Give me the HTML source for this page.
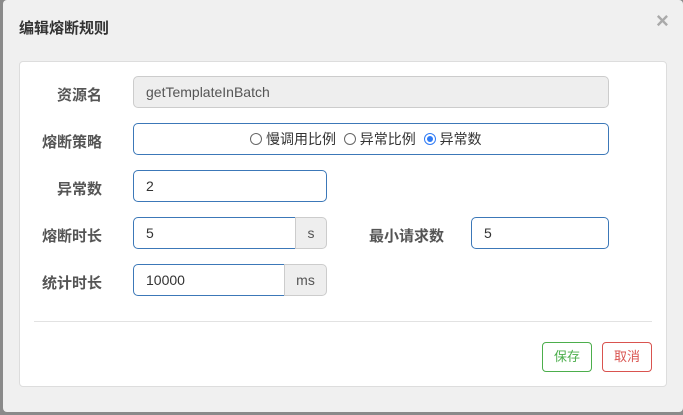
<!DOCTYPE html>
<html><head><meta charset="utf-8"><style>
*{box-sizing:border-box;margin:0;padding:0}
body{width:683px;height:415px;background:#8a8a8a;font-family:"Liberation Sans","Noto Sans CJK SC",sans-serif;position:relative;overflow:hidden}
.dlg{position:absolute;left:3px;top:0;width:680px;height:412px;background:#f0f0f0;border-radius:4px}
.title{position:absolute;left:19px;top:17px;font-size:15px;font-weight:bold;color:#333}
.x{position:absolute;left:656px;top:8px;font-size:22px;color:#aaa;font-weight:bold}
.panel{position:absolute;left:19px;top:61px;width:648px;height:326px;background:#fff;border:1px solid #ddd;border-radius:4px}
.lbl{position:absolute;font-size:15px;font-weight:bold;color:#555;text-align:right}
.in{position:absolute;height:32px;border:1px solid #3c78b8;border-radius:5px;font-size:14px;color:#333;padding-left:12px;line-height:30px;background:#fff}
.ad{position:absolute;height:32px;border:1px solid #ccc;background:#eee;border-radius:0 5px 5px 0;font-size:14px;color:#555;text-align:center;line-height:30px}
.r{display:inline-block;width:12px;height:12px;border:1px solid #666;border-radius:50%;vertical-align:-1px;margin-right:4px;position:relative}
.r.on{border-color:#2f7bf5;background:#fff}
.r.on:after{content:"";position:absolute;left:2px;top:2px;width:6px;height:6px;border-radius:50%;background:#2f7bf5}
.btn{position:absolute;top:342px;width:50px;height:30px;border:1px solid;border-radius:4px;font-size:13px;text-align:center;line-height:28px;background:#fff}
</style></head><body>
<div class="dlg"></div>
<div class="title">编辑熔断规则</div>
<div class="x">×</div>
<div class="panel"></div>
<div class="lbl" style="left:30px;top:84px;width:72px">资源名</div>
<div class="in" style="left:133px;top:76px;width:476px;background:#eee;border-color:#ccc;color:#555">getTemplateInBatch</div>
<div class="lbl" style="left:20px;top:131px;width:82px">熔断策略</div>
<div class="in" style="left:133px;top:123px;width:476px;padding-left:116px;font-size:14px"><span class="r"></span>慢调用比例&nbsp;&nbsp;<span class="r"></span>异常比例&nbsp;&nbsp;<span class="r on"></span>异常数</div>
<div class="lbl" style="left:30px;top:178px;width:72px">异常数</div>
<div class="in" style="left:133px;top:170px;width:194px">2</div>
<div class="lbl" style="left:20px;top:225px;width:82px">熔断时长</div>
<div class="in" style="left:133px;top:217px;width:163px;border-radius:5px 0 0 5px">5</div>
<div class="ad" style="left:295px;top:217px;width:32px">s</div>
<div class="lbl" style="left:350px;top:225px;width:94px">最小请求数</div>
<div class="in" style="left:471px;top:217px;width:138px">5</div>
<div class="lbl" style="left:20px;top:272px;width:82px">统计时长</div>
<div class="in" style="left:133px;top:264px;width:152px;border-radius:5px 0 0 5px">10000</div>
<div class="ad" style="left:284px;top:264px;width:43px">ms</div>
<div style="position:absolute;left:34px;top:321px;width:618px;height:1px;background:#e2e2e2"></div>
<div class="btn" style="left:542px;color:#4cae4c;border-color:#4cae4c">保存</div>
<div class="btn" style="left:602px;color:#d9534f;border-color:#d9534f">取消</div>
</body></html>
